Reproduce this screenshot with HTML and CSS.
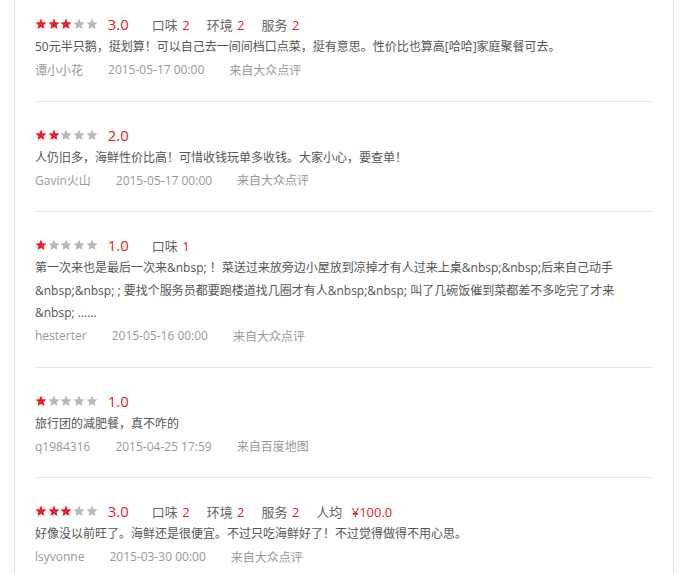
FILE: index.html
```html
<!DOCTYPE html>
<html lang="zh-CN">
  <head>
    <meta charset="UTF-8" />
    <title>评论列表</title>
    <link rel="stylesheet" href="styles.css">
  </head>
  <body>
    <div class="panel">
      <ul class="review-list">
        <li class="review">
          <div class="rating-row">
            <span class="stars" data-score="3"></span>
            <span class="score">3.0</span>
            <span class="sub">口味 <em>2</em></span>
            <span class="sub">环境 <em>2</em></span>
            <span class="sub">服务 <em>2</em></span>
          </div>
          <p class="content">50元半只鹅，挺划算！可以自己去一间间档口点菜，挺有意思。性价比也算高[哈哈]家庭聚餐可去。</p>
          <div class="meta">
            <span>谭小小花</span>
            <span>2015-05-17 00:00</span>
            <span>来自大众点评</span>
          </div>
        </li>

        <li class="review">
          <div class="rating-row">
            <span class="stars" data-score="2"></span>
            <span class="score">2.0</span>
          </div>
          <p class="content">人仍旧多，海鲜性价比高！可惜收钱玩单多收钱。大家小心，要查单！</p>
          <div class="meta">
            <span>Gavin火山</span>
            <span>2015-05-17 00:00</span>
            <span>来自大众点评</span>
          </div>
        </li>

        <li class="review">
          <div class="rating-row">
            <span class="stars" data-score="1"></span>
            <span class="score">1.0</span>
            <span class="sub">口味 <em>1</em></span>
          </div>
          <p class="content">第一次来也是最后一次来&amp;nbsp; ！菜送过来放旁边小屋放到凉掉才有人过来上桌&amp;nbsp;&amp;nbsp;后来自己动手 &amp;nbsp;&amp;nbsp; ; 要找个服务员都要跑楼道找几圈才有人&amp;nbsp;&amp;nbsp; 叫了几碗饭催到菜都差不多吃完了才来 &amp;nbsp; ......</p>
          <div class="meta">
            <span>hesterter</span>
            <span>2015-05-16 00:00</span>
            <span>来自大众点评</span>
          </div>
        </li>

        <li class="review">
          <div class="rating-row">
            <span class="stars" data-score="1"></span>
            <span class="score">1.0</span>
          </div>
          <p class="content">旅行团的减肥餐，真不咋的</p>
          <div class="meta">
            <span>q1984316</span>
            <span>2015-04-25 17:59</span>
            <span>来自百度地图</span>
          </div>
        </li>

        <li class="review">
          <div class="rating-row">
            <span class="stars" data-score="3"></span>
            <span class="score">3.0</span>
            <span class="sub">口味 <em>2</em></span>
            <span class="sub">环境 <em>2</em></span>
            <span class="sub">服务 <em>2</em></span>
            <span class="sub">人均 <em class="price">¥100.0</em></span>
          </div>
          <p class="content">好像没以前旺了。海鲜还是很便宜。不过只吃海鲜好了！不过觉得做得不用心思。</p>
          <div class="meta">
            <span>lsyvonne</span>
            <span>2015-03-30 00:00</span>
            <span>来自大众点评</span>
          </div>
        </li>
      </ul>
    </div>

    <script>
      // Fill star ratings
      const STAR_PATH = "M6 0.6l1.6 3.6 3.9 0.4-2.9 2.6 0.9 3.9L6 9.1 2.5 11.1l0.9-3.9L0.5 4.6l3.9-0.4z";

      document.querySelectorAll(".stars").forEach(function (el) {
        const score = parseInt(el.dataset.score, 10);
        let html = "";
        for (let i = 0; i < 5; i++) {
          const cls = i < score ? "star on" : "star";
          html += `<svg class="${cls}" viewBox="0 0 12 12"><path d="${STAR_PATH}"/></svg>`;
        }
        el.innerHTML = html;
      });
    </script>
  </body>
</html>
```

FILE: styles.css
```css
:root {
  --red: #e4232b;
  --text-color: #555;
  --muted: #999;
  --line: #e6e6e6;
}

body {
  margin: 0;
  background: #fff;
  font-family: "Open Sans", "Noto Sans CJK SC", sans-serif;
  color: var(--text-color);
}

.panel {
  width: 658px;
  margin-left: 14px;
  border-left: 1px solid #e2e2e2;
  border-right: 1px solid #e2e2e2;
  min-height: 573px;
}

.review-list {
  list-style: none;
  margin: 0;
  padding: 0 20px;
}

.review {
  padding: 21px 0 20px;
  border-bottom: 1px solid var(--line);
}

.review:first-child {
  padding-top: 12px;
}

.review:last-child {
  border-bottom: none;
}

/* Rating row */
.rating-row {
  display: flex;
  align-items: center;
  height: 24px;
}

.stars {
  display: flex;
  gap: 0.7px;
}

.star {
  width: 12px;
  height: 12px;
  fill: #b8b8b8;
}

.star.on {
  fill: var(--red);
}

.score {
  margin-left: 10px;
  font-size: 15px;
  color: var(--red);
}

.sub {
  font-size: 13px;
  color: #666;
  margin-left: 17px;
}

.score + .sub {
  margin-left: 23px;
}

.sub em {
  font-style: normal;
  color: var(--red);
  margin-left: 1px;
}

.sub em.price {
  margin-left: 6px;
}

/* Body text */
.content {
  margin: 0;
  font-size: 12px;
  line-height: 22.5px;
  color: var(--text-color);
  padding-right: 24px;
}

.meta {
  display: flex;
  height: 22px;
  align-items: center;
  font-size: 12px;
  color: var(--muted);
}

.meta span {
  margin-right: 25px;
}
```
